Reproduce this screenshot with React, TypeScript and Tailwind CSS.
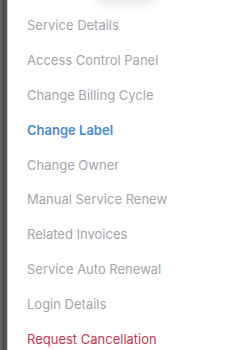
const items = [
  { label: 'Service Details' },
  { label: 'Access Control Panel' },
  { label: 'Change Billing Cycle' },
  { label: 'Change Label', active: true },
  { label: 'Change Owner' },
  { label: 'Manual Service Renew' },
  { label: 'Related Invoices' },
  { label: 'Service Auto Renewal' },
  { label: 'Login Details' },
  { label: 'Request Cancellation', danger: true },
];

export default function App() {
  return (
    <div className="relative flex h-[350px] w-[235px] overflow-hidden bg-white" style={{ fontFamily: 'Inter, "Noto Sans", sans-serif' }}>
      {/* dark edge */}
      <div className="w-[7px] shrink-0 bg-gradient-to-r from-[#6b6b6f] via-[#4a4a4e] to-[#5c5c60]" />
      <div className="w-px shrink-0 bg-[#c9c9cc]" />

      {/* faint shadow at top */}
      <div className="pointer-events-none absolute left-[95px] top-[-18px] h-[22px] w-[60px] rounded-full bg-[#d4d4d6] opacity-60 blur-[6px]" />

      <ul className="flex flex-col pl-[19px] pt-[16px]">
        {items.map((it) => (
          <li
            key={it.label}
            className={
              'h-[34.9px] shrink-0 text-[13px] leading-[18px] ' +
              (it.active
                ? 'font-semibold text-[#4a8ad0]'
                : it.danger
                ? 'text-[#c8374f]'
                : 'text-[#a5a5aa]')
            }
          >
            {it.label}
          </li>
        ))}
      </ul>
    </div>
  );
}
